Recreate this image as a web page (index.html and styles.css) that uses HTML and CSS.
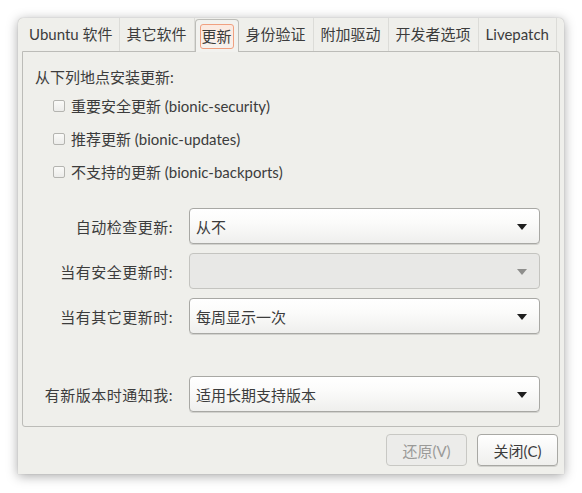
FILE: index.html
```html
<!DOCTYPE html>
<html lang="zh-CN">
<head>
<meta charset="utf-8">
<link rel="stylesheet" href="styles.css">
</head>
<body>
<div class="window">
  <div class="tabs">
    <div class="tab">Ubuntu 软件</div>
    <div class="tab">其它软件</div>
    <div class="tab active"><span class="focus">更新</span></div>
    <div class="tab">身份验证</div>
    <div class="tab">附加驱动</div>
    <div class="tab">开发者选项</div>
    <div class="tab">Livepatch</div>
  </div>
  <div class="page">
    <div class="heading">从下列地点安装更新:</div>
    <div class="checks">
      <label class="check"><span class="box"></span>重要安全更新 (bionic-security)</label>
      <label class="check"><span class="box"></span>推荐更新 (bionic-updates)</label>
      <label class="check"><span class="box"></span>不支持的更新 (bionic-backports)</label>
    </div>
    <div class="form">
      <div class="label">自动检查更新:</div>
      <div class="combo"><span>从不</span><span class="arrow"></span></div>
      <div class="label">当有安全更新时:</div>
      <div class="combo disabled"><span></span><span class="arrow"></span></div>
      <div class="label">当有其它更新时:</div>
      <div class="combo"><span>每周显示一次</span><span class="arrow"></span></div>
      <div class="label spaced">有新版本时通知我:</div>
      <div class="combo spaced"><span>适用长期支持版本</span><span class="arrow"></span></div>
    </div>
  </div>
  <div class="buttons">
    <div class="btn disabled">还原(V)</div>
    <div class="btn">关闭(C)</div>
  </div>
</div>
</body>
</html>
```

FILE: styles.css
```css
* { box-sizing: border-box; }
html, body { margin: 0; padding: 0; background: #ffffff; }
body {
  font-family: Lato, "Noto Sans CJK SC", sans-serif;
  font-size: 15px;
  color: #3c3c3c;
  width: 582px;
  height: 493px;
  overflow: hidden;
}
.window {
  margin: 18px 0 0 18px;
  width: 546px;
  height: 456px;
  background: #efefeb;
  border-radius: 5px 5px 0 0;
  box-shadow: 0 2px 12px rgba(0,0,0,0.35), 0 0 1px rgba(0,0,0,0.3);
  padding: 0 4px 0 4px;
  display: flex;
  flex-direction: column;
}
.tabs {
  display: flex;
  height: 33px;
  align-items: stretch;
}
.tab {
  padding: 0 7px;
  display: flex;
  align-items: center;
  line-height: 1;
  position: relative;
  white-space: nowrap;
  border-right: 1px solid #dcdcd8;
}
.tab:first-child { padding-right: 6px; }
.tab.active {
  border: 1px solid #bdbdb8;
  border-bottom: none;
  border-radius: 4px 4px 0 0;
  background: #f2f2ef;
  margin-top: 1px;
  margin-bottom: -1px;
  padding: 0 6px;
  z-index: 1;
}
.focus {
  border: 1px solid #f0a080;
  border-radius: 3px;
  padding: 4px 1px 4px 1px;
  margin: 0 -2px;
  background: linear-gradient(#fbe9e0, #f7f2ee);
}
.page {
  height: 376px;
  border: 1px solid #bcbcb8;
  border-radius: 0 3px 3px 3px;
  padding: 12px 13px 0 12px;
  display: flex;
  flex-direction: column;
}
.heading {
  height: 26px;
  line-height: 26px;
}
.checks {
  display: flex;
  flex-direction: column;
  padding-left: 18px;
  margin-top: -1px;
}
.check {
  height: 33px;
  display: flex;
  align-items: center;
  gap: 6px;
}
.box {
  width: 12px;
  height: 12px;
  border: 1px solid #b4b4b0;
  border-radius: 2px;
  background: linear-gradient(#fafaf8, #ececea);
}
.form {
  margin-top: 20px;
  display: grid;
  grid-template-columns: 140px 351px;
  column-gap: 14px;
  row-gap: 9px;
  align-items: center;
}
.label {
  text-align: right;
  padding-right: 2px;
  letter-spacing: 0.5px;
}
.label.spaced, .combo.spaced { margin-top: 33px; }
.combo {
  height: 36px;
  border: 1px solid #a8a8a4;
  border-radius: 4px;
  background: linear-gradient(#ffffff 0%, #fbfbfa 40%, #efefed 100%);
  box-shadow: 0 1px 0 rgba(0,0,0,0.12);
  display: flex;
  align-items: center;
  justify-content: space-between;
  padding: 0 12px 0 6px;
  color: #3c3c3c;
}
.combo.disabled {
  background: #e8e8e6;
  border-color: #c4c4c0;
  box-shadow: none;
}
.arrow {
  width: 0;
  height: 0;
  border-left: 5px solid transparent;
  border-right: 5px solid transparent;
  border-top: 6px solid #1e1e1e;
  margin-top: 1px;
}
.combo.disabled .arrow { border-top-color: #8e8e8c; }
.buttons {
  display: flex;
  justify-content: flex-end;
  gap: 10px;
  margin-top: 7px;
  padding-right: 2px;
}
.btn {
  width: 81px;
  height: 32px;
  border: 1px solid #a8a8a4;
  border-radius: 4px;
  background: linear-gradient(#ffffff, #efefed);
  box-shadow: 0 1px 0 rgba(0,0,0,0.12);
  display: flex;
  align-items: center;
  justify-content: center;
  color: #3c3c3c;
}
.btn.disabled {
  background: #ececea;
  border-color: #c8c8c4;
  color: #9a9a98;
  box-shadow: none;
}
```
